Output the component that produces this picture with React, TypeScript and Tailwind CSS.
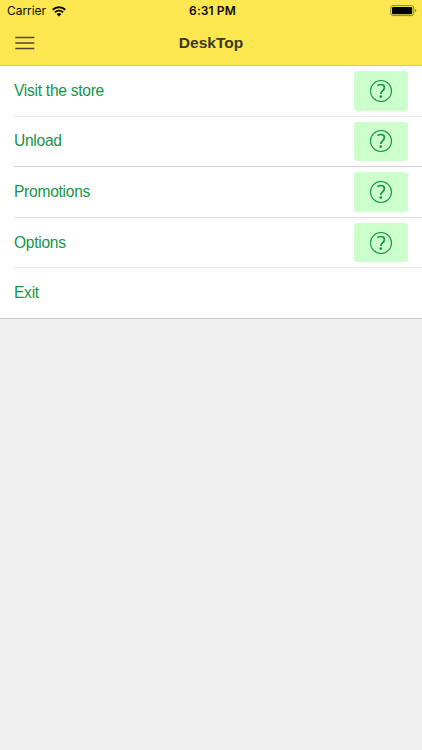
const items = [
    { label: 'Visit the store', help: true, line: 'border-[#e6e6e6]' },
    { label: 'Unload', help: true, line: 'border-[#cfcfcf]' },
    { label: 'Promotions', help: true, line: 'border-[#dedede]' },
    { label: 'Options', help: true, line: 'border-[#e6e6e6]' },
    { label: 'Exit', help: false, line: 'border-[#c8c8c8]' },
]

function WifiIcon() {
    return (
        <svg width="14" height="11" viewBox="0 0 14 11" fill="none">
            <path d="M0.7 3.8a9 9 0 0 1 12.6 0" stroke="#0c0a00" strokeWidth="2.1" />
            <path d="M2.9 6.3a5.8 5.8 0 0 1 8.2 0" stroke="#0c0a00" strokeWidth="1.9" />
            <path d="M4.6 8.1a3.4 3.4 0 0 1 4.8 0L7 10.5z" fill="#0c0a00" />
        </svg>
    )
}

function BatteryIcon() {
    return (
        <svg width="27" height="12" viewBox="0 0 27 12" fill="none">
            <rect x="0.7" y="0.6" width="23" height="10" rx="2.4" stroke="#8f8230" />
            <rect x="2" y="2" width="20.2" height="7.2" rx="1" fill="#000" />
            <path d="M25 4v3.2c.8-.2 1.3-.8 1.3-1.6s-.5-1.4-1.3-1.6z" fill="#8f8230" />
        </svg>
    )
}

function HelpIcon() {
    return (
        <svg width="24" height="24" viewBox="0 0 24 24" fill="none" stroke="#149447">
            <circle cx="12" cy="12" r="10.5" strokeWidth="1.1" />
            <path
                d="M8.4 6.6C9.5 5.9 10.700 5.500 11.900 5.500c2.300 0 3.500 1.100 3.500 2.900 0 1.600-.8 2.400-1.900 3.400-1.200 1-1.700 1.600-1.700 3.200"
                strokeWidth="1.7"
            />
            <circle cx="11.8" cy="17.6" r="1.4" fill="#149447" stroke="none" />
        </svg>
    )
}

function StatusBar() {
    return (
        <div className="grid grid-cols-3 items-center h-[22px] pl-[7px] pr-[5px] text-[#0c0a00]">
            <div className="flex items-center gap-[6px] font-[Inter,sans-serif] text-[12px] leading-[22px]">
                <span className="w-[38.5px] tracking-[-0.05px]">Carrier</span>
                <WifiIcon />
            </div>

            <span className="pl-px text-center font-[Inter,sans-serif] font-semibold text-[12px] leading-[22px] tracking-[0.1px]">
                6:31 PM
            </span>

            <div className="flex justify-end">
                <BatteryIcon />
            </div>
        </div>
    )
}

export default function App() {
    return (
        <div className="h-[750px] bg-[#efefef] font-['Liberation_Sans',Arial,sans-serif]">
            <header className="h-[66px] bg-[#fce750] border-b border-[#d5cb83]">
                <StatusBar />

                <div className="flex items-center h-[41px] px-[15px]">
                    <button className="w-5">
                        <svg width="20" height="14" viewBox="0 0 20 14" stroke="#4d4630" strokeWidth="1.3">
                            <path d="M0.3 1.5h19M0.3 7h19M0.3 12.5h19" />
                        </svg>
                    </button>

                    <h1 className="flex-1 text-center font-bold text-[15.5px] leading-5 text-[#3b3720] mr-5">
                        DeskTop
                    </h1>
                </div>
            </header>

            <ul className="bg-white">
                {items.map(({ label, help, line }) => (
                    <li key={label} className={help ? 'pl-[14px]' : `pl-[14px] border-b ${line}`}>
                        <div
                            className={
                                help
                                    ? `flex items-center justify-between h-[50.6px] pr-[14px] border-b ${line}`
                                    : 'flex items-center h-[49.6px]'
                            }
                        >
                            <span className="text-[15.6px] leading-5 tracking-[-0.28px] text-[#149447]">{label}</span>

                            {help && (
                                <button className="flex items-center justify-center w-[54px] h-[39.5px] rounded-[3px] bg-[#ccffcc]">
                                    <HelpIcon />
                                </button>
                            )}
                        </div>
                    </li>
                ))}
            </ul>
        </div>
    )
}
